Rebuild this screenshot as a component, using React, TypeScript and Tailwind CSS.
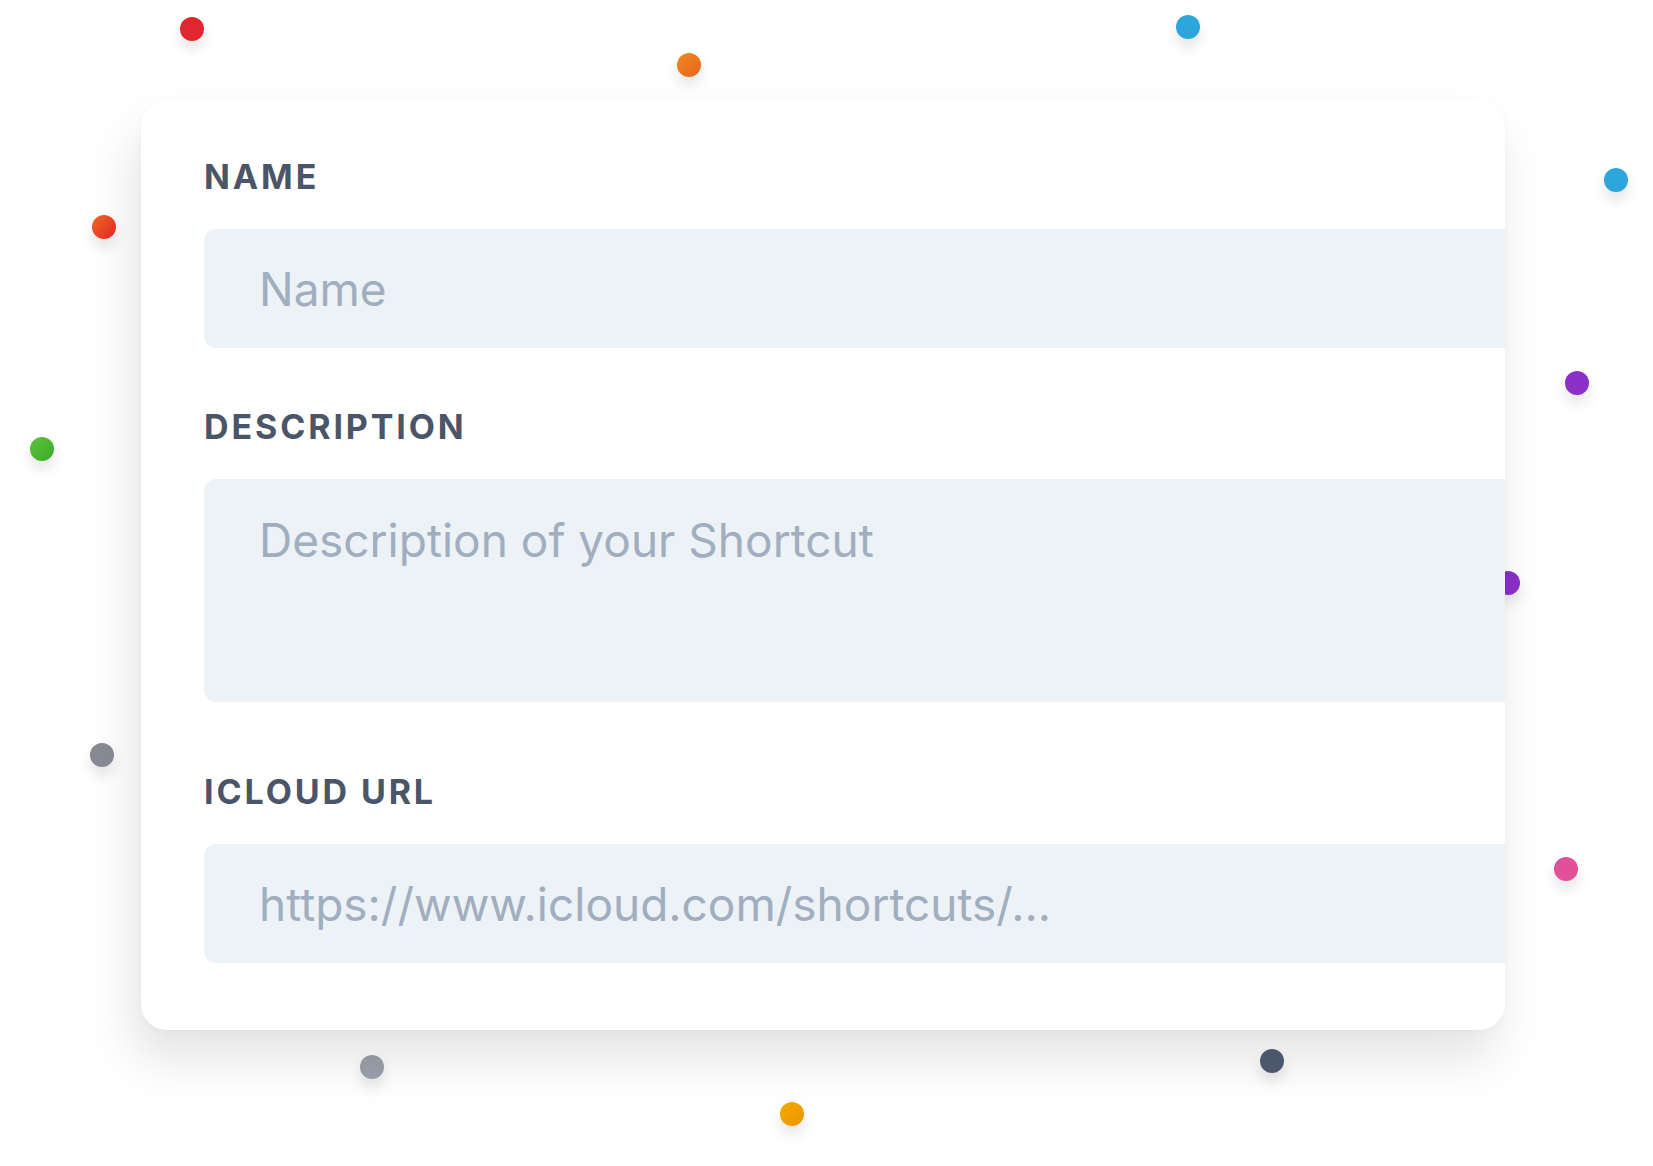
import React from "react";

type Dot = { x: number; y: number; bg: string };

const dots: Dot[] = [
  { x: 192, y: 29, bg: "#e0262f" },
  { x: 689, y: 65, bg: "linear-gradient(135deg,#f08a1c,#e8641f)" },
  { x: 1188, y: 27, bg: "#2ca6dc" },
  { x: 1616, y: 180, bg: "#2ca6dc" },
  { x: 104, y: 227, bg: "linear-gradient(135deg,#f26a22,#e4262c)" },
  { x: 1577, y: 383, bg: "#8b30c8" },
  { x: 42, y: 449, bg: "linear-gradient(135deg,#5cc23a,#3faa2a)" },
  { x: 1508, y: 583, bg: "#8b30c8" },
  { x: 102, y: 755, bg: "#878b96" },
  { x: 1566, y: 869, bg: "#e3509a" },
  { x: 372, y: 1067, bg: "#9ba1ac" },
  { x: 792, y: 1114, bg: "linear-gradient(135deg,#f2aa00,#ee9400)" },
  { x: 1272, y: 1061, bg: "#4f5c73" },
];

const font = { fontFamily: "Inter, 'Noto Sans', sans-serif" };

function Label({ children }: { children: React.ReactNode }) {
  return (
    <div
      className="text-[34px] leading-[34px] font-bold tracking-[0.085em] text-[#4a5568]"
      style={font}
    >
      {children}
    </div>
  );
}

export default function App() {
  return (
    <div className="relative w-[1653px] h-[1166px] overflow-hidden bg-white">
      {dots.map((d, i) => (
        <div
          key={i}
          className="absolute w-6 h-6 rounded-full shadow-[0_8px_14px_rgba(0,0,0,0.11)]"
          style={{ left: d.x - 12, top: d.y - 12, background: d.bg }}
        />
      ))}
      <div className="relative pt-[100px] pl-[141px]">
        <div className="w-[1364px] h-[930px] overflow-hidden rounded-[26px] bg-white shadow-[-8px_30px_50px_rgba(0,0,0,0.11),0_2px_6px_rgba(0,0,0,0.03)] pt-[60px] pl-[63px]">
          <Label>NAME</Label>
          <div className="mt-[35px] w-[1400px] h-[119px] rounded-[12px] bg-[#edf2f7] flex items-center pl-[55px]">
            <span className="text-[46px] leading-none text-[#a0aec0]" style={font}>
              Name
            </span>
          </div>
          <div className="mt-[62px]">
            <Label>DESCRIPTION</Label>
          </div>
          <div className="mt-[35px] w-[1400px] h-[223px] rounded-[12px] bg-[#edf2f7] pl-[55px] pt-[37px]">
            <span className="block text-[46px] leading-[48px] text-[#a0aec0]" style={font}>
              Description of your Shortcut
            </span>
          </div>
          <div className="mt-[73px]">
            <Label>ICLOUD URL</Label>
          </div>
          <div className="mt-[35px] w-[1400px] h-[119px] rounded-[12px] bg-[#edf2f7] flex items-center pl-[55px]">
            <span className="text-[46px] leading-none text-[#a0aec0]" style={font}>
              https://www.icloud.com/shortcuts/...
            </span>
          </div>
        </div>
      </div>
    </div>
  );
}
